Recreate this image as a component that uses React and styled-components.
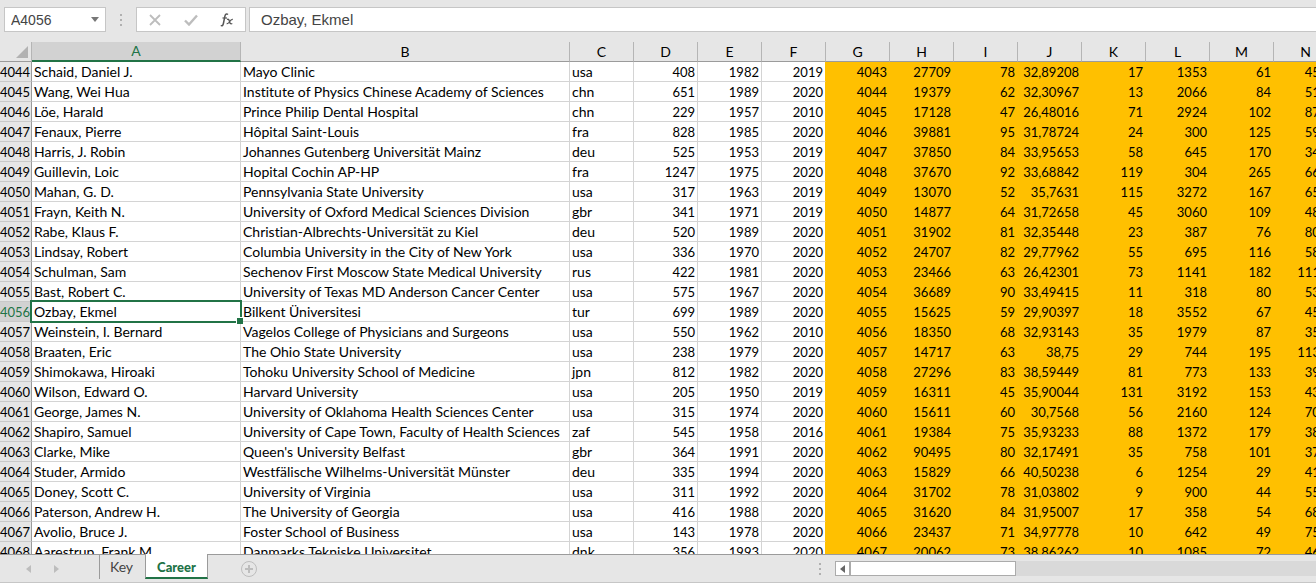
import React, { useState } from 'react';
import styled, { createGlobalStyle, css } from 'styled-components';

const GlobalStyle = createGlobalStyle`
  * {
    box-sizing: border-box;
  }

  body {
    margin: 0;
    overflow: hidden;
    background: #e6e6e6;
    font-family: Lato, 'Liberation Sans', sans-serif;
    font-variant-ligatures: none;
  }
`;

const Workbook = styled.div`
  display: flex;
  flex-direction: column;
  height: 100vh;
`;

const FormulaBar = styled.div`
  display: flex;
  flex: none;
  height: 42px;
  padding: 7px 0 10px 4px;
`;

const barBox = css`
  border: 1px solid #c6c6c6;
  background: #fff;
`;

const NameBox = styled.div`
  ${barBox}
  display: flex;
  align-items: center;
  width: 102px;
`;

const barText = css`
  min-width: 0;
  border: 0;
  outline: 0;
  background: transparent;
  color: #444;
  font-family: 'Liberation Sans', Arial, sans-serif;
`;

const NameInput = styled.input`
  ${barText}
  flex: 1;
  padding: 0 6px;
  font-size: 14px;
`;

const IconButton = styled.button`
  display: flex;
  align-items: center;
  justify-content: center;
  width: ${props => props.$width || 20}px;
  padding: 0;
  border: 0;
  background: transparent;
`;

const Grip = styled.div`
  display: flex;
  flex-direction: column;
  align-items: center;
  justify-content: center;
  gap: 3px;
  width: 30px;

  i {
    width: 2px;
    height: 2px;
    background: #b0b0b0;
  }
`;

const FormulaTools = styled.div`
  ${barBox}
  display: flex;
  justify-content: space-between;
  width: 110px;
  margin-right: 3px;
`;

const FormulaInput = styled.input`
  ${barText}
  ${barBox}
  flex: 1;
  padding: 0 11px;
  border-right: 0;
  font-size: 15px;
`;

const SheetPane = styled.div`
  flex: 1;
  min-height: 0;
  overflow: hidden;
  background: #fff;
`;

const Table = styled.table`
  width: 1338px;
  table-layout: fixed;
  border-collapse: separate;
  border-spacing: 0;
  color: #000;
  font-size: 13px;
  line-height: 17px;
`;

const Corner = styled.td`
  height: 20px;
  padding: 0 3px 3px 0;
  border-right: 1px solid #b5b5b5;
  border-bottom: 1px solid #9b9b9b;
  background: #e6e6e6;
  text-align: right;
  line-height: 0;
  vertical-align: bottom;
`;

const ColumnHead = styled.th`
  height: 20px;
  padding: 1px 0;
  border-right: 1px solid #b5b5b5;
  border-bottom: 1px solid #9b9b9b;
  background: #e6e6e6;
  font-size: 14px;
  font-weight: 400;
  line-height: 17px;
  ${props => props.$active && css`
    border-bottom: 2px solid #217346;
    background: #d2d2d2;
    color: #217346;
    line-height: 16px;
  `}
`;

const RowHead = styled.th`
  height: 20px;
  padding: 2px 2px 0 0;
  border-right: 1px solid #9b9b9b;
  border-bottom: 1px solid #c9c9c9;
  background: ${props => props.$active ? '#d2d2d2' : '#e6e6e6'};
  color: ${props => props.$active ? '#217346' : '#000'};
  font-weight: 400;
  text-align: right;
  white-space: nowrap;
`;

const Cell = styled.td`
  position: relative;
  height: 20px;
  padding: ${props => props.$number ? '2px 2px 0' : '1px 2px'};
  border-right: 1px solid ${props => props.$edge ? '#ffc000' : '#d4d4d4'};
  border-bottom: 1px solid #d4d4d4;
  font-size: ${props => props.$number ? 13 : 14}px;
  text-align: ${props => props.$number ? 'right' : 'left'};
  white-space: nowrap;
  ${props => props.$filled && css`
    border-color: #ffc000;
    background: #ffc000;
  `}
`;

const Selection = styled.div`
  position: absolute;
  z-index: 1;
  inset: -2px;
  border: 2px solid #217346;

  &::after {
    content: '';
    position: absolute;
    right: -3px;
    bottom: -3px;
    width: 6px;
    height: 6px;
    border: 1px solid #fff;
    border-width: 1px 0 0 1px;
    background: #217346;
  }
`;

const BottomBar = styled.div`
  display: flex;
  flex: none;
  height: 29px;
  border-top: 1px solid #9b9b9b;
  border-bottom: 1px solid #c6c6c6;
`;

const TabNav = styled.div`
  display: flex;
  justify-content: center;
  gap: 8px;
  width: 99px;
  padding-right: 14px;
`;

const Tabs = styled.div`
  display: flex;
  flex: none;
`;

const Tab = styled.button`
  width: ${props => props.$active ? 63 : 46}px;
  height: ${props => props.$active ? 25 : 24}px;
  margin-top: ${props => props.$active ? -1 : 0}px;
  padding: ${props => props.$active ? '2px 0 0' : '0 2px 2px 0'};
  border: 0;
  border-left: 1px solid #9b9b9b;
  background: transparent;
  color: #444;
  font-family: Lato, sans-serif;
  font-size: 14px;
  ${props => props.$active && css`
    border-right: 1px solid #9b9b9b;
    border-bottom: 2px solid #217346;
    background: #fff;
    color: #217346;
    font-size: 13px;
    font-weight: 900;
  `}
`;

const AddSheet = styled(IconButton)`
  margin-left: 31px;
`;

const Spacer = styled.div`
  flex: 1;
`;

const ScrollBar = styled.div`
  display: flex;
  flex: none;
  width: calc(37% - 6px);
  height: 15px;
  margin-top: 6px;
  background: #d9d9d9;
`;

const ScrollArrow = styled(IconButton)`
  border: 1px solid #ababab;
  background: #fff;
`;

const ScrollThumb = styled.div`
  width: 166px;
  border: 1px solid #ababab;
  background: #fff;
`;

const columns = [
  ['A', 209], ['B', 329], ['C', 64], ['D', 64], ['E', 64], ['F', 64], ['G', 64],
  ['H', 64], ['I', 64], ['J', 64], ['K', 64], ['L', 64], ['M', 64], ['N', 64],
];

const firstRow = 4044;
const activeRow = 4056;

const rows = [
  ['Schaid, Daniel J.', 'Mayo Clinic', 'usa', 408, 1982, 2019, 4043, 27709, 78, '32,89208', 17, 1353, 61, 4500],
  ['Wang, Wei Hua', 'Institute of Physics Chinese Academy of Sciences', 'chn', 651, 1989, 2020, 4044, 19379, 62, '32,30967', 13, 2066, 84, 5100],
  ['Löe, Harald', 'Prince Philip Dental Hospital', 'chn', 229, 1957, 2010, 4045, 17128, 47, '26,48016', 71, 2924, 102, 8700],
  ['Fenaux, Pierre', 'Hôpital Saint-Louis', 'fra', 828, 1985, 2020, 4046, 39881, 95, '31,78724', 24, 300, 125, 5900],
  ['Harris, J. Robin', 'Johannes Gutenberg Universität Mainz', 'deu', 525, 1953, 2019, 4047, 37850, 84, '33,95653', 58, 645, 170, 3400],
  ['Guillevin, Loic', 'Hopital Cochin AP-HP', 'fra', 1247, 1975, 2020, 4048, 37670, 92, '33,68842', 119, 304, 265, 6600],
  ['Mahan, G. D.', 'Pennsylvania State University', 'usa', 317, 1963, 2019, 4049, 13070, 52, '35,7631', 115, 3272, 167, 6500],
  ['Frayn, Keith N.', 'University of Oxford Medical Sciences Division', 'gbr', 341, 1971, 2019, 4050, 14877, 64, '31,72658', 45, 3060, 109, 4800],
  ['Rabe, Klaus F.', 'Christian-Albrechts-Universität zu Kiel', 'deu', 520, 1989, 2020, 4051, 31902, 81, '32,35448', 23, 387, 76, 8000],
  ['Lindsay, Robert', 'Columbia University in the City of New York', 'usa', 336, 1970, 2020, 4052, 24707, 82, '29,77962', 55, 695, 116, 5800],
  ['Schulman, Sam', 'Sechenov First Moscow State Medical University', 'rus', 422, 1981, 2020, 4053, 23466, 63, '26,42301', 73, 1141, 182, 11100],
  ['Bast, Robert C.', 'University of Texas MD Anderson Cancer Center', 'usa', 575, 1967, 2020, 4054, 36689, 90, '33,49415', 11, 318, 80, 5300],
  ['Ozbay, Ekmel', 'Bilkent Üniversitesi', 'tur', 699, 1989, 2020, 4055, 15625, 59, '29,90397', 18, 3552, 67, 4500],
  ['Weinstein, I. Bernard', 'Vagelos College of Physicians and Surgeons', 'usa', 550, 1962, 2010, 4056, 18350, 68, '32,93143', 35, 1979, 87, 3500],
  ['Braaten, Eric', 'The Ohio State University', 'usa', 238, 1979, 2020, 4057, 14717, 63, '38,75', 29, 744, 195, 11300],
  ['Shimokawa, Hiroaki', 'Tohoku University School of Medicine', 'jpn', 812, 1982, 2020, 4058, 27296, 83, '38,59449', 81, 773, 133, 3900],
  ['Wilson, Edward O.', 'Harvard University', 'usa', 205, 1950, 2019, 4059, 16311, 45, '35,90044', 131, 3192, 153, 4300],
  ['George, James N.', 'University of Oklahoma Health Sciences Center', 'usa', 315, 1974, 2020, 4060, 15611, 60, '30,7568', 56, 2160, 124, 7000],
  ['Shapiro, Samuel', 'University of Cape Town, Faculty of Health Sciences', 'zaf', 545, 1958, 2016, 4061, 19384, 75, '35,93233', 88, 1372, 179, 3800],
  ['Clarke, Mike', "Queen's University Belfast", 'gbr', 364, 1991, 2020, 4062, 90495, 80, '32,17491', 35, 758, 101, 3700],
  ['Studer, Armido', 'Westfälische Wilhelms-Universität Münster', 'deu', 335, 1994, 2020, 4063, 15829, 66, '40,50238', 6, 1254, 29, 4100],
  ['Doney, Scott C.', 'University of Virginia', 'usa', 311, 1992, 2020, 4064, 31702, 78, '31,03802', 9, 900, 44, 5500],
  ['Paterson, Andrew H.', 'The University of Georgia', 'usa', 416, 1988, 2020, 4065, 31620, 84, '31,95007', 17, 358, 54, 6800],
  ['Avolio, Bruce J.', 'Foster School of Business', 'usa', 143, 1978, 2020, 4066, 23437, 71, '34,97778', 10, 642, 49, 7500],
  ['Aarestrup, Frank M.', 'Danmarks Tekniske Universitet', 'dnk', 356, 1993, 2020, 4067, 20062, 73, '38,86262', 10, 1085, 72, 4600],
];

const Dots = () => (
  <Grip>
    <i />
    <i />
    <i />
  </Grip>
);

const Arrow = ({ left, color }) => (
  <svg width="5" height="8" viewBox="0 0 5 8">
    <path d={left ? 'M5 0v8L0 4z' : 'M0 0v8l5-4z'} fill={color} />
  </svg>
);

const App = () => {
  const [value, setValue] = useState('Ozbay, Ekmel');
  const [tab, setTab] = useState('Career');

  return (
    <Workbook>
      <GlobalStyle />
      <FormulaBar>
        <NameBox>
          <NameInput aria-label="Name box" defaultValue="A4056" />
          <IconButton aria-label="Open name list">
            <svg width="8" height="5" viewBox="0 0 8 5">
              <path d="M0 0h8L4 5z" fill="#777" />
            </svg>
          </IconButton>
        </NameBox>
        <Dots />
        <FormulaTools>
          <IconButton $width={36} aria-label="Cancel">
            <svg width="12" height="12" viewBox="0 0 12 12">
              <path d="M1 1l10 10M11 1L1 11" stroke="#bdbdbd" strokeWidth="1.8" />
            </svg>
          </IconButton>
          <IconButton $width={36} aria-label="Enter">
            <svg width="14" height="12" viewBox="0 0 14 12">
              <path d="M1 6.5l4 4L13 1.5" fill="none" stroke="#bdbdbd" strokeWidth="2.4" />
            </svg>
          </IconButton>
          <IconButton $width={36} aria-label="Insert function">
            <svg width="14" height="14" viewBox="0 0 14 14" fill="none" stroke="#555">
              <path d="M8 1.5C6.5.2 5.3 1.2 4.9 3.2L3.4 10.5C3 12.6 2 13.2.8 12.4" strokeWidth="1.5" />
              <path d="M2.5 5h4.5" strokeWidth="1.2" />
              <path d="M7 6.5c1.8-.8 2 .5 2.5 2.2s1 2.8 2.8 1.8M12.8 6.5c-1.6-.3-2.3.8-3.2 2.2s-1.4 2.2-2.9 1.8" strokeWidth="1.3" />
            </svg>
          </IconButton>
        </FormulaTools>
        <FormulaInput
          aria-label="Formula"
          value={value}
          onChange={event => setValue(event.target.value)}
        />
      </FormulaBar>

      <SheetPane>
        <Table>
          <colgroup>
            <col style={{ width: 32 }} />
            {columns.map(([name, width]) => (
              <col key={name} style={{ width }} />
            ))}
          </colgroup>
          <thead>
            <tr>
              <Corner>
                <svg width="12" height="12" viewBox="0 0 12 12">
                  <path d="M12 0v12H0z" fill="#b2b2b2" />
                </svg>
              </Corner>
              {columns.map(([name]) => (
                <ColumnHead key={name} scope="col" $active={name === 'A'}>{name}</ColumnHead>
              ))}
            </tr>
          </thead>
          <tbody>
            {rows.map((row, index) => {
              const number = firstRow + index;
              return (
                <tr key={number}>
                  <RowHead scope="row" $active={number === activeRow}>{number}</RowHead>
                  {row.map((cell, col) => (
                    <Cell key={col} $number={col > 2} $edge={col === 5} $filled={col > 5}>
                      {cell}
                      {number === activeRow && col === 0 && <Selection />}
                    </Cell>
                  ))}
                </tr>
              );
            })}
          </tbody>
        </Table>
      </SheetPane>

      <BottomBar>
        <TabNav>
          <IconButton aria-label="Previous sheet"><Arrow left color="#bdbdbd" /></IconButton>
          <IconButton aria-label="Next sheet"><Arrow color="#bdbdbd" /></IconButton>
        </TabNav>
        <Tabs>
          {['Key', 'Career'].map(name => (
            <Tab key={name} $active={tab === name} onClick={() => setTab(name)}>{name}</Tab>
          ))}
        </Tabs>
        <AddSheet aria-label="New sheet">
          <svg width="16" height="16" viewBox="0 0 16 16" fill="none" stroke="#bdbdbd">
            <circle cx="8" cy="8" r="7.5" />
            <path d="M8 4v8M4 8h8" strokeWidth="2" />
          </svg>
        </AddSheet>
        <Spacer />
        <Dots />
        <ScrollBar>
          <ScrollArrow $width={15} aria-label="Scroll left"><Arrow left color="#666" /></ScrollArrow>
          <ScrollThumb />
        </ScrollBar>
      </BottomBar>
    </Workbook>
  );
};

export default App;
